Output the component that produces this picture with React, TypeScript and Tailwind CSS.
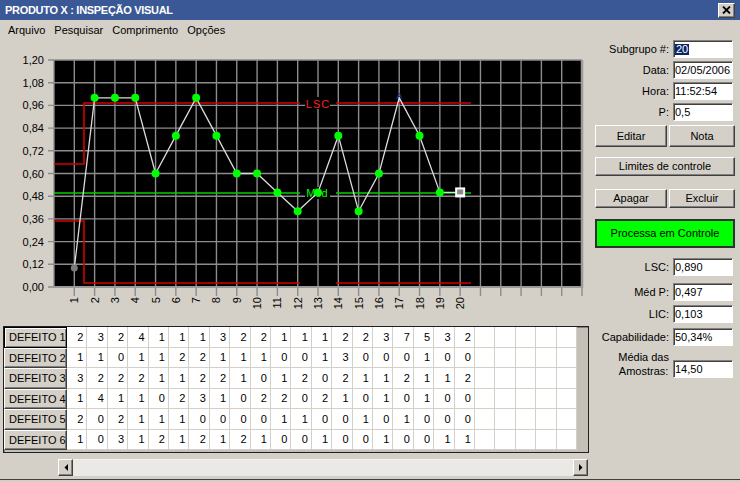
import React from "react"

const P = [0.1, 1, 1, 1, 0.6, 0.8, 1, 0.8, 0.6, 0.6, 0.5, 0.4, 0.5, 0.8, 0.4, 0.6, 1, 0.8, 0.5, 0.5]

const DEFEITOS = [
  [2, 3, 2, 4, 1, 1, 1, 3, 2, 2, 1, 1, 1, 2, 2, 3, 7, 5, 3, 2],
  [1, 1, 0, 1, 1, 2, 2, 1, 1, 1, 0, 0, 1, 3, 0, 0, 0, 1, 0, 0],
  [3, 2, 2, 2, 1, 1, 2, 2, 1, 0, 1, 2, 0, 2, 1, 1, 2, 1, 1, 2],
  [1, 4, 1, 1, 0, 2, 3, 1, 0, 2, 2, 0, 2, 1, 0, 1, 0, 1, 0, 0],
  [2, 0, 2, 1, 1, 1, 0, 0, 0, 0, 1, 1, 0, 0, 1, 0, 1, 0, 0, 0],
  [1, 0, 3, 1, 2, 1, 2, 1, 2, 1, 0, 0, 1, 0, 0, 1, 0, 0, 1, 1],
]

const TOP = 20
const BOTTOM = 247
const LEFT = 54
const RIGHT = 582
const DX = (RIGHT - LEFT) / 26
const DY = (BOTTOM - TOP) / 10

const xOf = (i: number) => LEFT + (i + 1) * DX
const yOf = (v: number) => BOTTOM - (v / 1.2) * (BOTTOM - TOP)

const raised =
  "border border-t-white border-l-white border-r-[#404040] border-b-[#404040] shadow-[inset_-1px_-1px_0_#808080] bg-[#d4d0c8]"
const sunken =
  "border border-t-[#808080] border-l-[#808080] border-r-white border-b-white shadow-[inset_1px_1px_0_#404040] bg-white"

function Chart() {
  const pts = P.map((v, i) => `${xOf(i)},${yOf(v)}`).join(" ")
  return (
    <svg width={590} height={282} className="block" fontFamily="Liberation Sans, Arial, sans-serif">
      <rect x={LEFT} y={TOP} width={RIGHT - LEFT} height={BOTTOM - TOP} fill="#000" />
      {Array.from({ length: 11 }, (_, k) => (
        <g key={"h" + k}>
          <line x1={48} x2={RIGHT} y1={TOP + k * DY} y2={TOP + k * DY} stroke="#8c8c8c" strokeWidth={1.4} />
          <text x={44} y={TOP + k * DY} textAnchor="end" dominantBaseline="central" fontSize={11} fill="#000">
            {((10 - k) * 0.12).toFixed(2).replace(".", ",")}
          </text>
        </g>
      ))}
      {Array.from({ length: 27 }, (_, j) => (
        <line
          key={"v" + j}
          x1={LEFT + j * DX}
          x2={LEFT + j * DX}
          y1={TOP}
          y2={j === 0 ? BOTTOM : 256}
          stroke="#8c8c8c"
          strokeWidth={1.4}
        />
      ))}
      <line x1={RIGHT} x2={RIGHT} y1={TOP} y2={BOTTOM + 1} stroke="#9a9a9a" strokeWidth={2.5} />
      <line x1={LEFT} x2={RIGHT} y1={BOTTOM} y2={BOTTOM} stroke="#9a9a9a" strokeWidth={2} />

      {/* limites de controle */}
      <path d="M54,124 H84 V63 H300 M336,63 H471" stroke="#d40000" strokeWidth={1.6} fill="none" />
      <path d="M54,181 H84 V243 H300 M336,243 H471" stroke="#d40000" strokeWidth={1.6} fill="none" />
      <path d="M54,153 H300 M336,153 H471" stroke="#00d000" strokeWidth={1.4} fill="none" />
      <rect x={305} y={57} width={25} height={12} fill="#000" />
      <text x={318} y={63.5} textAnchor="middle" dominantBaseline="central" fontSize={11} letterSpacing={1} fill="#ff2020">
        LSC
      </text>
      <rect x={305} y={147} width={25} height={12} fill="#000" />
      <text x={317} y={153} textAnchor="middle" dominantBaseline="central" fontSize={11} fill="#00ff00">
        Méd
      </text>

      <polyline points={pts} fill="none" stroke="#dcdcdc" strokeWidth={1.3} />
      {P.map((v, i) => {
        if (i === 0) return <circle key={i} cx={xOf(i)} cy={yOf(v)} r={3.5} fill="#7a7a7a" />
        if (i === 16)
          return (
            <text key={i} x={xOf(i)} y={yOf(v) + 1} textAnchor="middle" fontSize={9} fontWeight="bold" fill="#1c2f80">
              A
            </text>
          )
        if (i === 19)
          return (
            <g key={i}>
              <rect x={xOf(i) - 5} y={yOf(v) - 5} width={10} height={10} fill="#fff" />
              <rect x={xOf(i) - 3} y={yOf(v) - 3} width={6} height={5} fill="#8a8a8a" />
            </g>
          )
        return <circle key={i} cx={xOf(i)} cy={yOf(v)} r={4} fill="#00ff00" />
      })}

      {P.map((_, i) => (
        <text
          key={"l" + i}
          x={xOf(i)}
          y={257}
          transform={`rotate(-90 ${xOf(i)} 257)`}
          textAnchor="end"
          dominantBaseline="central"
          fontSize={11}
          fill="#000"
        >
          {i + 1}
        </text>
      ))}
    </svg>
  )
}

function Field({ label, value, className = "", selected = false }: { label: string; value: string; className?: string; selected?: boolean }) {
  return (
    <div className={`flex items-center justify-end ${className}`}>
      <span className="mr-[4px]">{label}</span>
      <div className={`${sunken} w-[60px] h-[18px] flex items-center pl-[1px] leading-none`}>
        {selected ? <span className="bg-[#0a246a] text-white px-[1px]">{value}</span> : value}
      </div>
    </div>
  )
}

function Button({ children, className = "" }: { children: React.ReactNode; className?: string }) {
  return <div className={`${raised} flex items-center justify-center ${className}`}>{children}</div>
}

function ScrollArrow({ dir }: { dir: "left" | "right" }) {
  return (
    <div className={`${raised} w-[15px] h-full flex items-center justify-center`}>
      <svg width={4} height={7} viewBox="0 0 4 7">
        {dir === "left" ? <path d="M4,0 V7 L0.5,3.5 Z" fill="#000" /> : <path d="M0,0 V7 L3.5,3.5 Z" fill="#000" />}
      </svg>
    </div>
  )
}

export default function App() {
  return (
    <div className="w-[740px] h-[482px] bg-[#d4d0c8] flex flex-col overflow-hidden font-['Liberation_Sans',Arial,sans-serif] text-[11px] text-black">
      <div className="h-[20px] bg-[#3a5896] flex items-center justify-between pl-[5px] pr-[5px]">
        <span className="text-white font-bold text-[11px] tracking-[-0.3px]">PRODUTO X : INSPEÇÃO VISUAL</span>
        <div className={`${raised} w-[17px] h-[15px] flex items-center justify-center`}>
          <svg width={9} height={8} viewBox="0 0 9 8">
            <path d="M1,0.5 L8,7.5 M8,0.5 L1,7.5" stroke="#000" strokeWidth={1.8} />
          </svg>
        </div>
      </div>

      <div className="h-[20px] flex items-center pl-[8px] gap-[9px]">
        <span>Arquivo</span>
        <span>Pesquisar</span>
        <span>Comprimento</span>
        <span>Opções</span>
      </div>

      <div className="flex flex-1">
        <div className="w-[590px] flex flex-col">
          <Chart />

          <div className="ml-[3px] mt-[4px] w-[586px] h-[127px] border border-[#202020] shadow-[inset_1px_1px_0_#808080] bg-[#c4c0b8] flex items-start">
            <div className="flex flex-col w-[63px] shrink-0">
              {DEFEITOS.map((_, r) => (
                <div
                  key={r}
                  className={`h-[20.5px] flex items-center pl-[4px] whitespace-nowrap ${
                    r === 0 ? "border border-black shadow-[inset_1px_1px_0_#fff,inset_-1px_-1px_0_#808080] bg-[#d4d0c8]" : raised
                  }`}
                >
                  DEFEITO {r + 1}
                </div>
              ))}
            </div>
            <div className="w-[510px] shrink-0 grid grid-cols-[repeat(25,minmax(0,1fr))] bg-white">
              {DEFEITOS.map((row, r) =>
                Array.from({ length: 25 }, (_, c) => (
                  <div
                    key={r + "-" + c}
                    className="h-[20.5px] border-r border-b border-[#d4d0c8] flex items-center justify-end pr-[3px]"
                  >
                    {c < row.length ? row[c] : ""}
                  </div>
                ))
              )}
            </div>
          </div>

          <div className="ml-[58px] mt-[6px] w-[530px] h-[17px] flex">
            <ScrollArrow dir="left" />
            <div className="flex-1 bg-[#ebe9e5] border-t border-[#f4f3f0]" />
            <ScrollArrow dir="right" />
          </div>
        </div>

        <div className="w-[150px] flex flex-col pl-[5px] pr-[5px]">
          <Field label="Subgrupo #:" value="20" selected className="mr-[2px]" />
          <Field label="Data:" value="02/05/2006" className="mr-[2px] mt-[3px]" />
          <Field label="Hora:" value="11:52:54" className="mr-[2px] mt-[3px]" />
          <Field label="P:" value="0,5" className="mr-[2px] mt-[3px]" />

          <div className="flex justify-between mt-[4px]">
            <Button className="w-[72px] h-[22px]">Editar</Button>
            <Button className="w-[66px] h-[22px]">Nota</Button>
          </div>
          <Button className="mt-[10px] h-[19px]">Limites de controle</Button>
          <div className="flex justify-between mt-[13px]">
            <Button className="w-[72px] h-[19px]">Apagar</Button>
            <Button className="w-[66px] h-[19px]">Excluir</Button>
          </div>

          <div className="mt-[11px] h-[29px] bg-[#00ff00] border-2 border-[#303030] flex items-center justify-center">
            Processa em Controle
          </div>

          <Field label="LSC:" value="0,890" className="mr-[2px] mt-[10px]" />
          <Field label="Méd P:" value="0,497" className="mr-[2px] mt-[7px]" />
          <Field label="LIC:" value="0,103" className="mr-[2px] mt-[4px]" />
          <Field label="Capabilidade:" value="50,34%" className="mr-[2px] mt-[5px]" />
          <div className="flex items-end justify-end mr-[2px] mt-[4px]">
            <span className="mr-[4px] text-center leading-[14px]">
              Média das
              <br />
              Amostras:
            </span>
            <div className={`${sunken} w-[60px] h-[18px] flex items-center pl-[1px] leading-none`}>14,50</div>
          </div>
        </div>
      </div>

      <div className="h-[1px] bg-[#404040]" />
      <div className="h-[2px] bg-[#d4d0c8]" />
    </div>
  )
}
